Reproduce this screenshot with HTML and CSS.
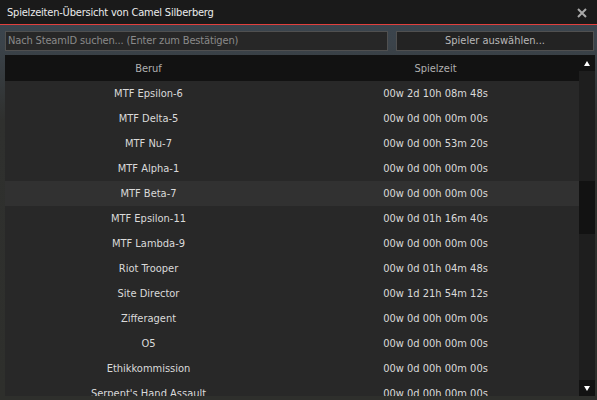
FILE: index.html
```html
<!DOCTYPE html>
<html lang="de">
<head>
<meta charset="utf-8">
<title>Spielzeiten-Übersicht</title>
<link rel="stylesheet" href="styles.css">
</head>
<body>
<div class="window">
  <div class="titlebar">
    <span class="title">Spielzeiten-Übersicht von Camel Silberberg</span>
    <svg class="close" width="10" height="10" viewBox="0 0 10 10"><path d="M1 1 L9 9 M9 1 L1 9" stroke="#a9a9a9" stroke-width="2"/></svg>
  </div>
  <div class="toolbar">
    <div class="search">Nach SteamID suchen... (Enter zum Bestätigen)</div>
    <div class="pick">Spieler auswählen...</div>
  </div>
  <div class="list">
    <div class="table">
      <div class="head"><span>Beruf</span><span>Spielzeit</span></div>
      <div class="rows">
        <div class="row"><span>MTF Epsilon-6</span><span>00w 2d 10h 08m 48s</span></div>
        <div class="row"><span>MTF Delta-5</span><span>00w 0d 00h 00m 00s</span></div>
        <div class="row"><span>MTF Nu-7</span><span>00w 0d 00h 53m 20s</span></div>
        <div class="row"><span>MTF Alpha-1</span><span>00w 0d 00h 00m 00s</span></div>
        <div class="row hover"><span>MTF Beta-7</span><span>00w 0d 00h 00m 00s</span></div>
        <div class="row"><span>MTF Epsilon-11</span><span>00w 0d 01h 16m 40s</span></div>
        <div class="row"><span>MTF Lambda-9</span><span>00w 0d 00h 00m 00s</span></div>
        <div class="row"><span>Riot Trooper</span><span>00w 0d 01h 04m 48s</span></div>
        <div class="row"><span>Site Director</span><span>00w 1d 21h 54m 12s</span></div>
        <div class="row"><span>Zifferagent</span><span>00w 0d 00h 00m 00s</span></div>
        <div class="row"><span>O5</span><span>00w 0d 00h 00m 00s</span></div>
        <div class="row"><span>Ethikkommission</span><span>00w 0d 00h 00m 00s</span></div>
        <div class="row"><span>Serpent's Hand Assault</span><span>00w 0d 00h 00m 00s</span></div>
      </div>
    </div>
    <div class="scrollbar">
      <div class="sbtn up"><svg width="6" height="5" viewBox="0 0 6 5"><path d="M3 0 L6 5 L0 5 Z" fill="#fff"/></svg></div>
      <div class="track"><div class="thumb"></div></div>
      <div class="sbtn down"><svg width="6" height="5" viewBox="0 0 6 5"><path d="M0 0 L6 0 L3 5 Z" fill="#fff"/></svg></div>
    </div>
  </div>
</div>
</body>
</html>
```

FILE: styles.css
```css
html, body {
  margin: 0;
  padding: 0;
}
body {
  width: 597px;
  height: 400px;
  overflow: hidden;
  background: linear-gradient(to bottom, #3a4652 0px, #3b434a 45px, #2f302e 120px, #2e2f2c 100%);
  font-family: "DejaVu Sans", Tahoma, sans-serif;
  font-stretch: condensed;
  font-size: 11px;
}
.window {
  display: flex;
  flex-direction: column;
  height: 400px;
}
.titlebar {
  height: 24px;
  flex: none;
  background: #1a1a1a;
  border-bottom: 1px solid #e0403e;
  display: flex;
  align-items: center;
  justify-content: space-between;
  padding: 0 10px 0 7px;
  color: #ececec;
  font-size: 11px;
  letter-spacing: -0.2px;
}
.close {
  display: block;
  margin-top: 1px;
}
.toolbar {
  display: flex;
  gap: 8px;
  margin: 6px 3px 0 5px;
  height: 20px;
  flex: none;
}
.search {
  width: 383px;
  box-sizing: border-box;
  background: #272727;
  border: 1px solid #505050;
  color: #8a8a8a;
  font-size: 11px;
  letter-spacing: -0.15px;
  line-height: 18px;
  padding-left: 2px;
}
.pick {
  flex: 1;
  box-sizing: border-box;
  background: #232323;
  border: 1px solid #505050;
  color: #b8b8b8;
  font-size: 11px;
  line-height: 18px;
  text-align: center;
}
.list {
  margin: 4px 2px 0 5px;
  height: 341px;
  flex: none;
  display: flex;
  overflow: hidden;
}
.table {
  flex: 1;
  display: flex;
  flex-direction: column;
  overflow: hidden;
}
.head {
  height: 26px;
  flex: none;
  background: #121212;
  display: grid;
  grid-template-columns: 1fr 1fr;
  align-items: center;
  text-align: center;
  color: #b0b0b0;
}
.rows {
  flex: 1;
  overflow: hidden;
}
.row {
  height: 25px;
  display: grid;
  grid-template-columns: 1fr 1fr;
  align-items: center;
  text-align: center;
  background: #282828;
  color: #dadada;
}
.row.hover {
  background: #313131;
}
.scrollbar {
  width: 16px;
  flex: none;
  display: flex;
  flex-direction: column;
  background: #1e1e1e;
}
.sbtn {
  height: 16px;
  flex: none;
  background: #121212;
  display: flex;
  align-items: center;
  justify-content: center;
}
.sbtn svg {
  display: block;
}
.track {
  flex: 1;
  padding-top: 110px;
}
.thumb {
  height: 53px;
  background: #121212;
}
```
